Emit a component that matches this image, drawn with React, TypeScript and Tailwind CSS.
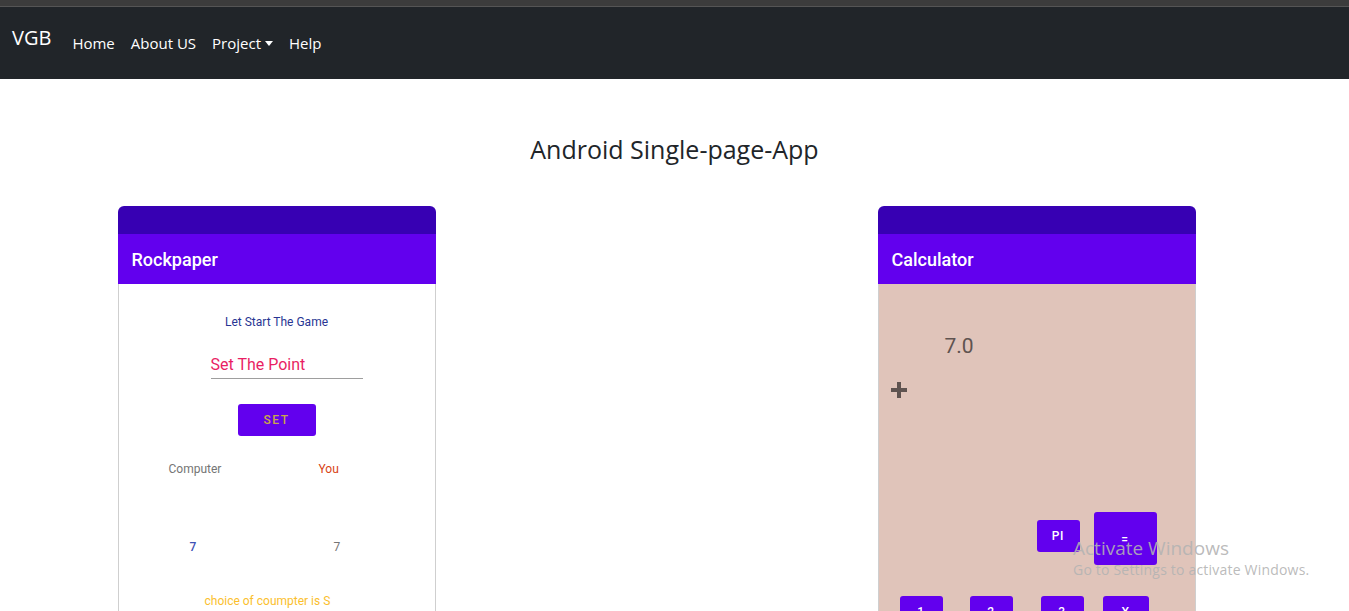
import React from "react";

const roboto = { fontFamily: "Roboto, 'Noto Sans', sans-serif" };

function CardHead({ title }: { title: string }) {
  return (
    <>
      <div className="h-[28px] bg-[#3700b3] rounded-t-[6px]" />
      <div className="h-[50px] bg-[#6200ee] flex items-center pl-[14px] text-white text-[18px] font-medium" style={roboto}>
        {title}
      </div>
    </>
  );
}

function Btn({ children, className }: { children: React.ReactNode; className: string }) {
  return (
    <div className={"bg-[#6200ee] rounded-[3px] text-white text-[12px] font-medium flex items-center justify-center tracking-wider shrink-0 " + className} style={roboto}>
      {children}
    </div>
  );
}

export default function App() {
  return (
    <div className="min-h-[611px] bg-white relative overflow-hidden" style={{ fontFamily: "'Open Sans', 'Noto Sans', sans-serif" }}>
      <div className="h-[7px] bg-[#3c3c3c] border-b border-[#555]" />
      <nav className="h-[72px] bg-[#212529] flex items-center text-white">
        <span className="ml-[12px] text-[20px] -mt-[10px]">VGB</span>
        <div className="flex items-center ml-[21px] text-[15px] gap-[16px] text-white">
          <span>Home</span>
          <span>About US</span>
          <span className="flex items-center">
            Project
            <span className="ml-[4px] w-0 h-0 border-l-[4px] border-r-[4px] border-t-[5px] border-l-transparent border-r-transparent border-t-white" />
          </span>
          <span>Help</span>
        </div>
      </nav>
      <h1 className="text-center text-[25px] text-[#212529] mt-[52px] leading-[36px]">Android Single-page-App</h1>
      <div className="w-[1140px] mx-auto px-[12px] grid grid-cols-3 gap-x-[24px] mt-[39px]">
        {/* Rockpaper */}
        <div className="w-[318px] ml-[1px]">
          <CardHead title="Rockpaper" />
          <div className="border-x border-[#cfcfcf] bg-white h-[340px] flex flex-col" style={roboto}>
            <div className="pt-[30px] text-center text-[12px] text-[#283593] leading-[16px]">Let Start The Game</div>
            <div className="ml-[92px] mt-[25px] w-[152px] border-b border-[#9e9e9e] text-[16px] text-[#e91e63] leading-[20px] pb-[3px]">Set The Point</div>
            <div className="flex justify-center mt-[25px]">
              <div className="w-[78px] h-[32px] bg-[#6200ee] rounded-[3px] flex items-center justify-center text-[12px] font-medium tracking-[0.12em] text-[#c9a74a]">SET</div>
            </div>
            <div className="flex pl-[50px] mt-[25px] text-[12px] leading-[16px]">
              <span className="w-[150px] text-[#757575]">Computer</span>
              <span className="text-[#d84315]">You</span>
            </div>
            <div className="flex pl-[71px] mt-[62px] text-[12px] leading-[16px]">
              <span className="w-[144px] text-[#3f51b5] font-medium">7</span>
              <span className="text-[#757575]">7</span>
            </div>
            <div className="pl-[86px] mt-[38px] text-[12px] leading-[16px] text-[#fbc02d]">choice of coumpter is S</div>
          </div>
        </div>
        <div />
        {/* Calculator */}
        <div className="w-[318px] ml-[1px]">
          <CardHead title="Calculator" />
          <div className="border-x border-[#cfcfcf] bg-[#e0c4ba] h-[340px] flex flex-col" style={roboto}>
            <div className="pl-[66px] pt-[49px] text-[21px] leading-[26px] text-[#5f5350]">7.0</div>
            <div className="pl-[12px] mt-[23px]">
              <svg width="16" height="16" viewBox="0 0 16 16"><path d="M6 0h4v6h6v4h-6v6H6v-6H0V6h6z" fill="#5f5350" /></svg>
            </div>
            <div className="flex items-start mt-[114px] pl-[158px] gap-[14px]">
              <Btn className="mt-[8px] w-[43px] h-[32px]">PI</Btn>
              <Btn className="w-[63px] h-[53px]">=</Btn>
            </div>
            <div className="flex mt-[31px] pl-[21px]">
              <Btn className="w-[43px] h-[32px]">1</Btn>
              <Btn className="ml-[27px] w-[43px] h-[32px]">2</Btn>
              <Btn className="ml-[28px] w-[43px] h-[32px]">3</Btn>
              <Btn className="ml-[19px] w-[46px] h-[32px]">X</Btn>
            </div>
          </div>
        </div>
      </div>
      <div className="absolute left-[1073px] top-[535px] text-[#b3b3b3]/90 pointer-events-none">
        <div className="text-[19px] leading-[26px]">Activate Windows</div>
        <div className="text-[14px] leading-[20px] mt-[-1px] tracking-[0.2px]">Go to Settings to activate Windows.</div>
      </div>
    </div>
  );
}
